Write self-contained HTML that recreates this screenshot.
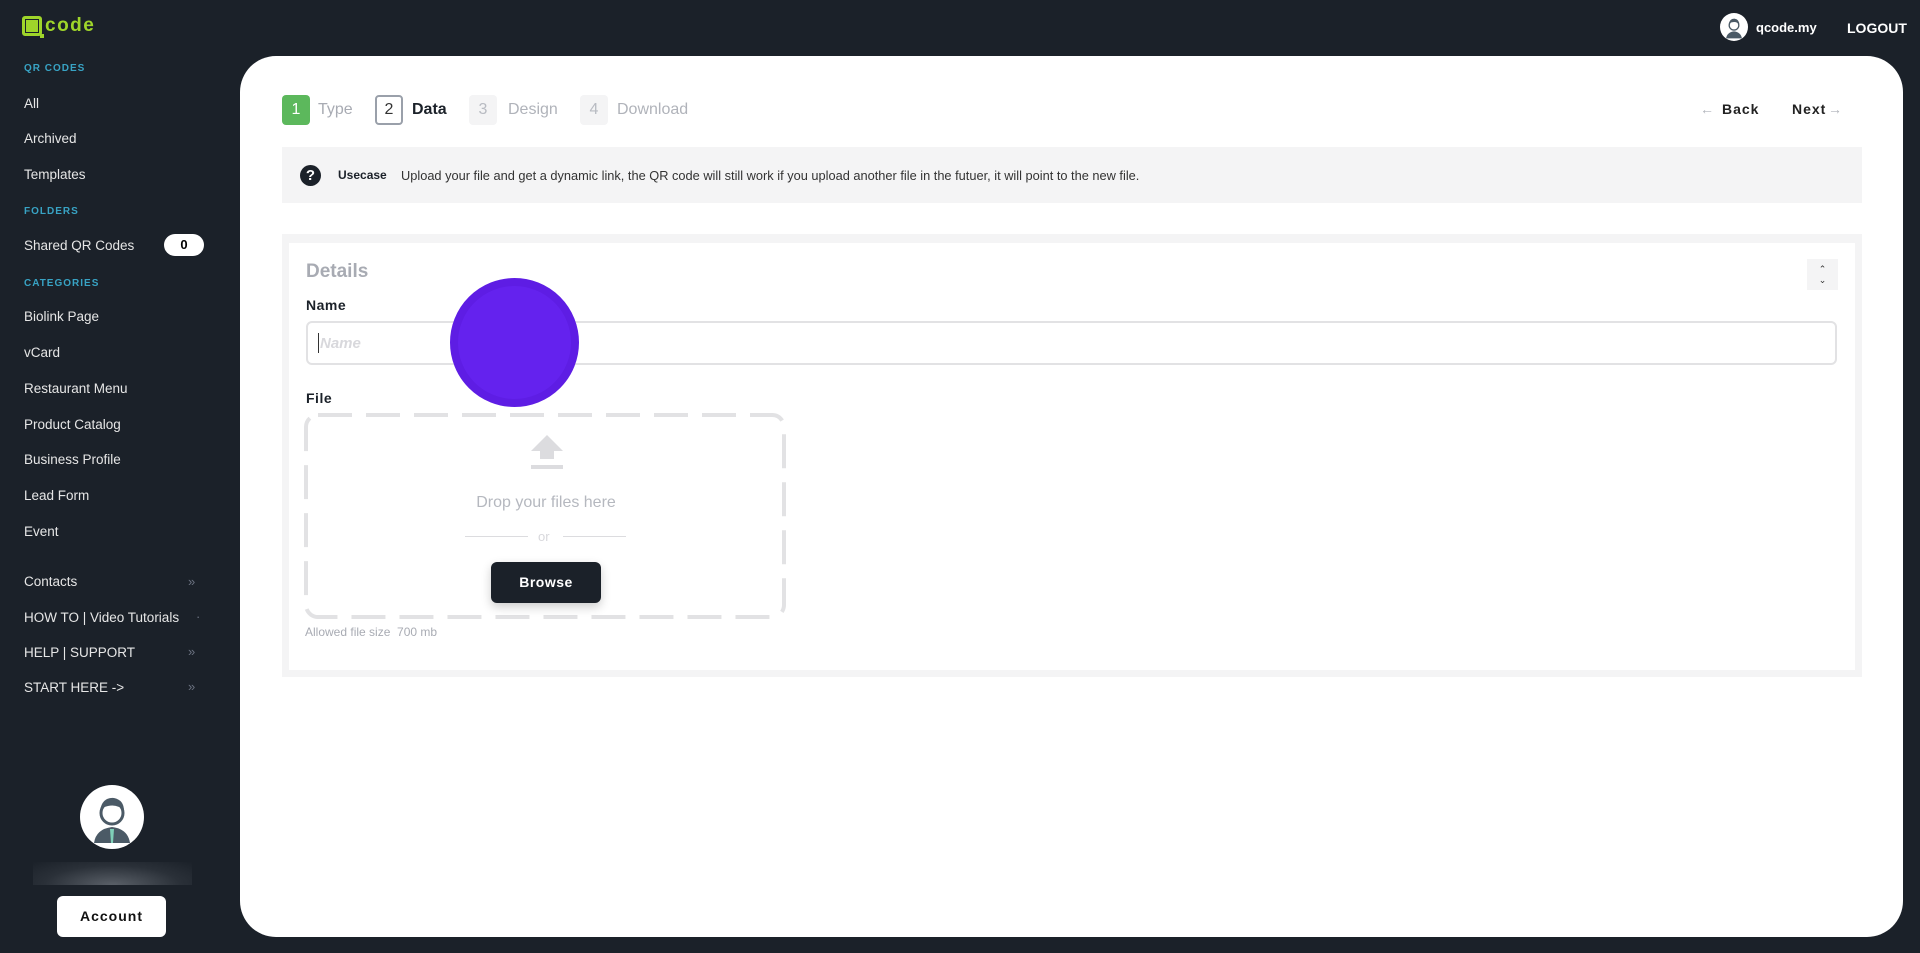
<!DOCTYPE html>
<html><head><meta charset="utf-8"><style>
*{box-sizing:border-box;margin:0;padding:0}
body{width:1920px;height:953px;background:#1b2129;font-family:"Liberation Sans",sans-serif;position:relative;overflow:hidden}
.a{position:absolute;white-space:nowrap}
.sb{color:#e6e6e6;font-size:13.5px;left:24px}
.hd{color:#38a3c4;font-size:10px;font-weight:bold;letter-spacing:1px;left:24px}
.chev{color:#6b7280;font-size:13px;left:188px}
.step{border-radius:4px;width:28px;height:30px;top:94px;font-size:16px;text-align:center;line-height:30px}
.st{top:101px;font-size:16px}
</style></head><body>
<!-- logo -->
<div class="a" style="left:22px;top:16px;width:20px;height:20px;border:3px solid #9fd52a;border-radius:3px"></div>
<div class="a" style="left:26px;top:20px;width:12px;height:12px;background:#9fd52a"></div>
<div class="a" style="left:40px;top:34px;width:4px;height:4px;background:#9fd52a"></div>
<div class="a" style="left:45px;top:15px;font-size:19px;color:#9fd52a;font-weight:bold;letter-spacing:1.5px">code</div>

<div class="a hd" style="top:63px">QR CODES</div>
<div class="a sb" style="top:96px">All</div>
<div class="a sb" style="top:131px">Archived</div>
<div class="a sb" style="top:167px">Templates</div>
<div class="a hd" style="top:206px">FOLDERS</div>
<div class="a sb" style="top:238px">Shared QR Codes</div>
<div class="a" style="left:164px;top:234px;width:40px;height:22px;background:#fff;border-radius:11px;text-align:center;font-size:13px;font-weight:bold;line-height:22px">0</div>
<div class="a hd" style="top:278px">CATEGORIES</div>
<div class="a sb" style="top:309px">Biolink Page</div>
<div class="a sb" style="top:345px">vCard</div>
<div class="a sb" style="top:381px">Restaurant Menu</div>
<div class="a sb" style="top:417px">Product Catalog</div>
<div class="a sb" style="top:452px">Business Profile</div>
<div class="a sb" style="top:488px">Lead Form</div>
<div class="a sb" style="top:524px">Event</div>
<div class="a sb" style="top:574px">Contacts</div>
<div class="a sb" style="top:610px">HOW TO | Video Tutorials</div>
<div class="a sb" style="top:645px">HELP | SUPPORT</div>
<div class="a sb" style="top:680px">START HERE -&gt;</div>
<div class="a chev" style="top:574px">»</div>
<div class="a chev" style="top:609px;left:196px">·</div>
<div class="a chev" style="top:644px">»</div>
<div class="a chev" style="top:679px">»</div>

<!-- bottom avatar -->
<svg class="a" style="left:80px;top:785px" width="64" height="64" viewBox="0 0 64 64"><circle cx="32" cy="32" r="32" fill="#fff"/><path d="M14 58 Q16 44 32 42 Q48 44 50 58 Z" fill="#4b5a66"/><path d="M30 44 L34 44 L33 58 L31 58Z" fill="#7fd0b8"/><circle cx="32" cy="28" r="11" fill="#fff" stroke="#4b5a66" stroke-width="3"/><path d="M20 26 Q22 12 34 13 Q44 15 44 26 Q38 19 28 21 Q22 22 20 26Z" fill="#4b5a66"/></svg>
<div class="a" style="left:33px;top:862px;width:159px;height:23px;background:radial-gradient(ellipse at 50% 100%,#5a6068 0%,#2a3038 60%,#1b2129 100%)"></div>
<div class="a" style="left:57px;top:896px;width:109px;height:41px;background:#fff;border-radius:6px;text-align:center;line-height:41px;font-size:14px;font-weight:bold;letter-spacing:1px;color:#111">Account</div>

<!-- header -->
<svg class="a" style="left:1720px;top:13px" width="28" height="28" viewBox="0 0 64 64"><circle cx="32" cy="32" r="32" fill="#fff"/><path d="M14 58 Q16 44 32 42 Q48 44 50 58 Z" fill="#4b5a66"/><circle cx="32" cy="28" r="11" fill="#fff" stroke="#4b5a66" stroke-width="3"/><path d="M20 26 Q22 12 34 13 Q44 15 44 26 Q38 19 28 21 Q22 22 20 26Z" fill="#4b5a66"/></svg>
<div class="a" style="left:1756px;top:20px;color:#fff;font-size:13px;font-weight:bold">qcode.my</div>
<div class="a" style="left:1847px;top:20px;color:#fff;font-size:14px;font-weight:bold">LOGOUT</div>

<!-- main card -->
<div class="a" style="left:240px;top:56px;width:1663px;height:881px;background:#fff;border-radius:36px"></div>

<div class="a step" style="left:282px;background:#5cb85c;color:#fff;top:95px">1</div>
<div class="a st" style="left:318px;color:#a8abb3">Type</div>
<div class="a step" style="left:375px;border:2px solid #9aa0aa;color:#333;line-height:26px;top:95px">2</div>
<div class="a st" style="left:412px;color:#1b2129;font-weight:bold">Data</div>
<div class="a step" style="left:469px;background:#f4f4f5;color:#b8bbc2;top:95px">3</div>
<div class="a st" style="left:508px;color:#b0b3ba">Design</div>
<div class="a step" style="left:580px;background:#f4f4f5;color:#b8bbc2;top:95px">4</div>
<div class="a st" style="left:617px;color:#b0b3ba">Download</div>

<div class="a" style="left:1700px;top:101px;font-size:14px;color:#b0b3ba">←</div>
<div class="a" style="left:1722px;top:101px;font-size:14px;font-weight:bold;color:#222;letter-spacing:1px">Back</div>
<div class="a" style="left:1792px;top:101px;font-size:14px;font-weight:bold;color:#222;letter-spacing:1px">Next</div>
<div class="a" style="left:1828px;top:101px;font-size:14px;color:#b0b3ba">→</div>

<div class="a" style="left:282px;top:147px;width:1580px;height:56px;background:#f4f4f5"></div>
<div class="a" style="left:300px;top:165px;width:21px;height:21px;border-radius:50%;background:#1b2129;color:#fff;font-weight:bold;font-size:15px;text-align:center;line-height:21px">?</div>
<div class="a" style="left:338px;top:168px;font-size:12px;font-weight:bold;color:#1b2129">Usecase</div>
<div class="a" style="left:401px;top:168px;font-size:12.8px;color:#333">Upload your file and get a dynamic link, the QR code will still work if you upload another file in the futuer, it will point to the new file.</div>

<div class="a" style="left:282px;top:234px;width:1580px;height:443px;background:#f4f4f5"></div>
<div class="a" style="left:289px;top:243px;width:1566px;height:427px;background:#fff"></div>
<div class="a" style="left:306px;top:261px;font-size:19px;font-weight:bold;color:#a8abb3">Details</div>
<div class="a" style="left:1807px;top:259px;width:31px;height:31px;background:#f4f4f5;text-align:center;font-size:9px;line-height:11px;color:#333;padding-top:5px">⌃<br>⌄</div>
<div class="a" style="left:306px;top:297px;font-size:14px;font-weight:bold;color:#1b2129;letter-spacing:.5px">Name</div>
<div class="a" style="left:306px;top:321px;width:1531px;height:44px;border:2px solid #e2e2e4;border-radius:6px"></div>
<div class="a" style="left:318px;top:333px;width:1px;height:20px;background:#333"></div>
<div class="a" style="left:320px;top:335px;font-size:15px;font-style:italic;font-weight:bold;color:#d8d8dc">Name</div>
<div class="a" style="left:306px;top:390px;font-size:14px;font-weight:bold;color:#1b2129;letter-spacing:.5px">File</div>

<svg class="a" style="left:303px;top:412px" width="484" height="208"><rect x="3" y="3" width="478" height="202" rx="12" fill="none" stroke="#e2e2e4" stroke-width="4" stroke-dasharray="34 14"/></svg>
<svg class="a" style="left:530px;top:435px" width="34" height="34"><path d="M17 0 L33 16 L24 16 L24 24 L10 24 L10 16 L1 16Z" fill="#dcdcdf"/><rect x="1" y="30" width="32" height="4" fill="#dcdcdf"/></svg>
<div class="a" style="left:0;width:1092px;top:494px;text-align:center;font-size:16px;color:#b5b8bf">Drop your files here</div>
<div class="a" style="left:465px;top:536px;width:63px;height:1px;background:#dcdcdf"></div>
<div class="a" style="left:563px;top:536px;width:63px;height:1px;background:#dcdcdf"></div>
<div class="a" style="left:538px;top:529px;font-size:13px;color:#d8d8dc">or</div>
<div class="a" style="left:491px;top:562px;width:110px;height:41px;background:#1b2129;border-radius:6px;color:#fff;font-weight:bold;font-size:14px;text-align:center;line-height:41px;box-shadow:0 4px 10px rgba(0,0,0,.2);letter-spacing:.5px">Browse</div>
<div class="a" style="left:305px;top:625px;font-size:12px;color:#a8abb3">Allowed file size&nbsp; 700 mb</div>

<div class="a" style="left:450px;top:278px;width:129px;height:129px;border-radius:50%;background:#6422ee;border:8px solid #5e1de4"></div>
</body></html>
